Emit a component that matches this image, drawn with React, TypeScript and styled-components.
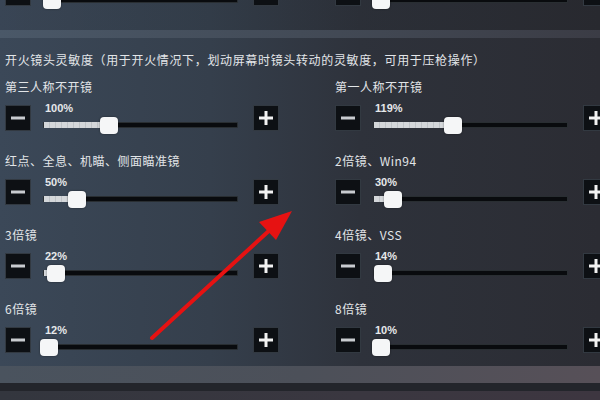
import styled, { createGlobalStyle } from 'styled-components';

const GlobalStyle = createGlobalStyle`
  html, body {
    margin: 0;
    padding: 0;
    background: #2c2f37;
  }
`;

type Slider = { label: string; value: string; pos: number };

const leftSliders: Slider[] = [
  { label: '第三人称不开镜', value: '100%', pos: 57 },
  { label: '红点、全息、机瞄、侧面瞄准镜', value: '50%', pos: 25 },
  { label: '3倍镜', value: '22%', pos: 4 },
  { label: '6倍镜', value: '12%', pos: -3 },
];

const rightSliders: Slider[] = [
  { label: '第一人称不开镜', value: '119%', pos: 71 },
  { label: '2倍镜、Win94', value: '30%', pos: 11 },
  { label: '4倍镜、VSS', value: '14%', pos: 1 },
  { label: '8倍镜', value: '10%', pos: -1 },
];

const Screen = styled.div`
  position: relative;
  width: 600px;
  height: 400px;
  overflow: hidden;
  background: linear-gradient(90deg, #3b4858 0%, #353f4c 35%, #2e323b 60%, #2b2c33 100%);
  font-family: 'Noto Sans CJK SC', 'Noto Sans', sans-serif;
  color: #e2e5e8;
`;

const TopStrip = styled.div`
  height: 30px;
  overflow: hidden;
  display: grid;
  grid-template-columns: 330px 1fr;
  padding-left: 5px;
  background: linear-gradient(90deg, rgba(0, 0, 0, 0.04), rgba(0, 0, 0, 0.08));
`;

const ClippedRow = styled.div`
  margin-top: -20px;
`;

const Band = styled.div<{ $h: number; $tone: string }>`
  height: ${(p) => p.$h}px;
  background: ${(p) => p.$tone};
`;

const Header = styled.div`
  margin: 14px 0 11px 5px;
  font-size: 12px;
  line-height: 16px;
  letter-spacing: 0.65px;
  white-space: nowrap;
`;

const Columns = styled.div`
  display: grid;
  grid-template-columns: 330px 1fr;
  padding-left: 5px;
`;

const Column = styled.div`
  display: flex;
  flex-direction: column;
  gap: 20px;
`;

const Setting = styled.div`
  display: flex;
  flex-direction: column;
  gap: 10px;
`;

const Label = styled.div`
  font-size: 12px;
  line-height: 16px;
  letter-spacing: 0.5px;
  white-space: nowrap;
`;

const Control = styled.div`
  display: flex;
  align-items: flex-start;
  height: 28px;
`;

const StepButton = styled.div<{ $plus?: boolean }>`
  position: relative;
  flex: 0 0 auto;
  width: 26px;
  height: 26px;
  box-sizing: border-box;
  background: #0d1014;
  border: 1px solid rgba(120, 135, 150, 0.35);
  margin-right: ${(p) => (p.$plus ? 0 : 12)}px;
  margin-left: ${(p) => (p.$plus ? 15 : 0)}px;

  &::before,
  &::after {
    content: '';
    position: absolute;
    left: 50%;
    top: 50%;
    background: ${(p) => (p.$plus ? '#f2f2f2' : '#c9ccd0')};
  }
  &::before {
    width: 14px;
    height: 3px;
    transform: translate(-50%, -50%);
  }
  &::after {
    display: ${(p) => (p.$plus ? 'block' : 'none')};
    width: 3px;
    height: 14px;
    transform: translate(-50%, -50%);
  }
`;

const SliderCol = styled.div`
  width: 195px;
  margin-top: -2px;
  display: flex;
  flex-direction: column;
`;

const Percent = styled.div`
  font-family: 'Liberation Sans', Arial, sans-serif;
  font-weight: bold;
  font-size: 11px;
  line-height: 10px;
  height: 10px;
  padding-left: 2px;
  color: #e6e8ea;
`;

const TrackArea = styled.div`
  position: relative;
  height: 24px;
  display: flex;
  align-items: center;
`;

const Track = styled.div`
  position: relative;
  width: 100%;
  height: 6px;
  box-sizing: border-box;
  background: #090b0e;
  border: 1px solid rgba(140, 150, 160, 0.25);
  border-radius: 1px;
`;

const Fill = styled.div`
  position: absolute;
  left: 0;
  top: -1px;
  bottom: -1px;
  background: repeating-linear-gradient(90deg, #d4d7da 0 5px, #bfc3c7 5px 6px);
`;

const Thumb = styled.div`
  position: absolute;
  top: 50%;
  width: 18px;
  height: 17px;
  margin-top: -8px;
  background: #f5f6f7;
  border-radius: 4px;
  box-shadow: 0 0 2px rgba(0, 0, 0, 0.5);
`;

const Arrow = styled.svg`
  position: absolute;
  left: 0;
  top: 0;
  pointer-events: none;
`;

function SliderControl({ value, pos }: { value: string; pos: number }) {
  return (
    <Control>
      <StepButton />
      <SliderCol>
        <Percent>{value}</Percent>
        <TrackArea>
          <Track>
            <Fill style={{ width: Math.max(pos + 4, 0) }} />
          </Track>
          <Thumb style={{ left: pos }} />
        </TrackArea>
      </SliderCol>
      <StepButton $plus />
    </Control>
  );
}

function SliderColumn({ items }: { items: Slider[] }) {
  return (
    <Column>
      {items.map((s) => (
        <Setting key={s.label}>
          <Label>{s.label}</Label>
          <SliderControl value={s.value} pos={s.pos} />
        </Setting>
      ))}
    </Column>
  );
}

export default function App() {
  return (
    <>
      <GlobalStyle />
      <Screen>
        <TopStrip>
          <ClippedRow>
            <SliderControl value="" pos={0} />
          </ClippedRow>
          <ClippedRow>
            <SliderControl value="" pos={-1} />
          </ClippedRow>
        </TopStrip>
        <Band $h={8} $tone="linear-gradient(90deg, #4a5868, #434b57 50%, #3b3c45)" />
        <Header>开火镜头灵敏度（用于开火情况下，划动屏幕时镜头转动的灵敏度，可用于压枪操作）</Header>
        <Columns>
          <SliderColumn items={leftSliders} />
          <SliderColumn items={rightSliders} />
        </Columns>
        <Band $h={11} $tone="transparent" />
        <Band $h={17} $tone="linear-gradient(90deg, #4a535e, #4c5059 50%, #575058)" />
        <Band $h={8} $tone="#23252b" />
        <Band $h={20} $tone="linear-gradient(90deg, #33363e, #3a3740 60%, #3d3640)" />
        <Arrow width="600" height="400" viewBox="0 0 600 400">
          <line x1="152" y1="338" x2="272" y2="228" stroke="#e61212" strokeWidth="4" strokeLinecap="round" />
          <polygon points="292,211 259,222 276,240" fill="#e61212" />
        </Arrow>
      </Screen>
    </>
  );
}
